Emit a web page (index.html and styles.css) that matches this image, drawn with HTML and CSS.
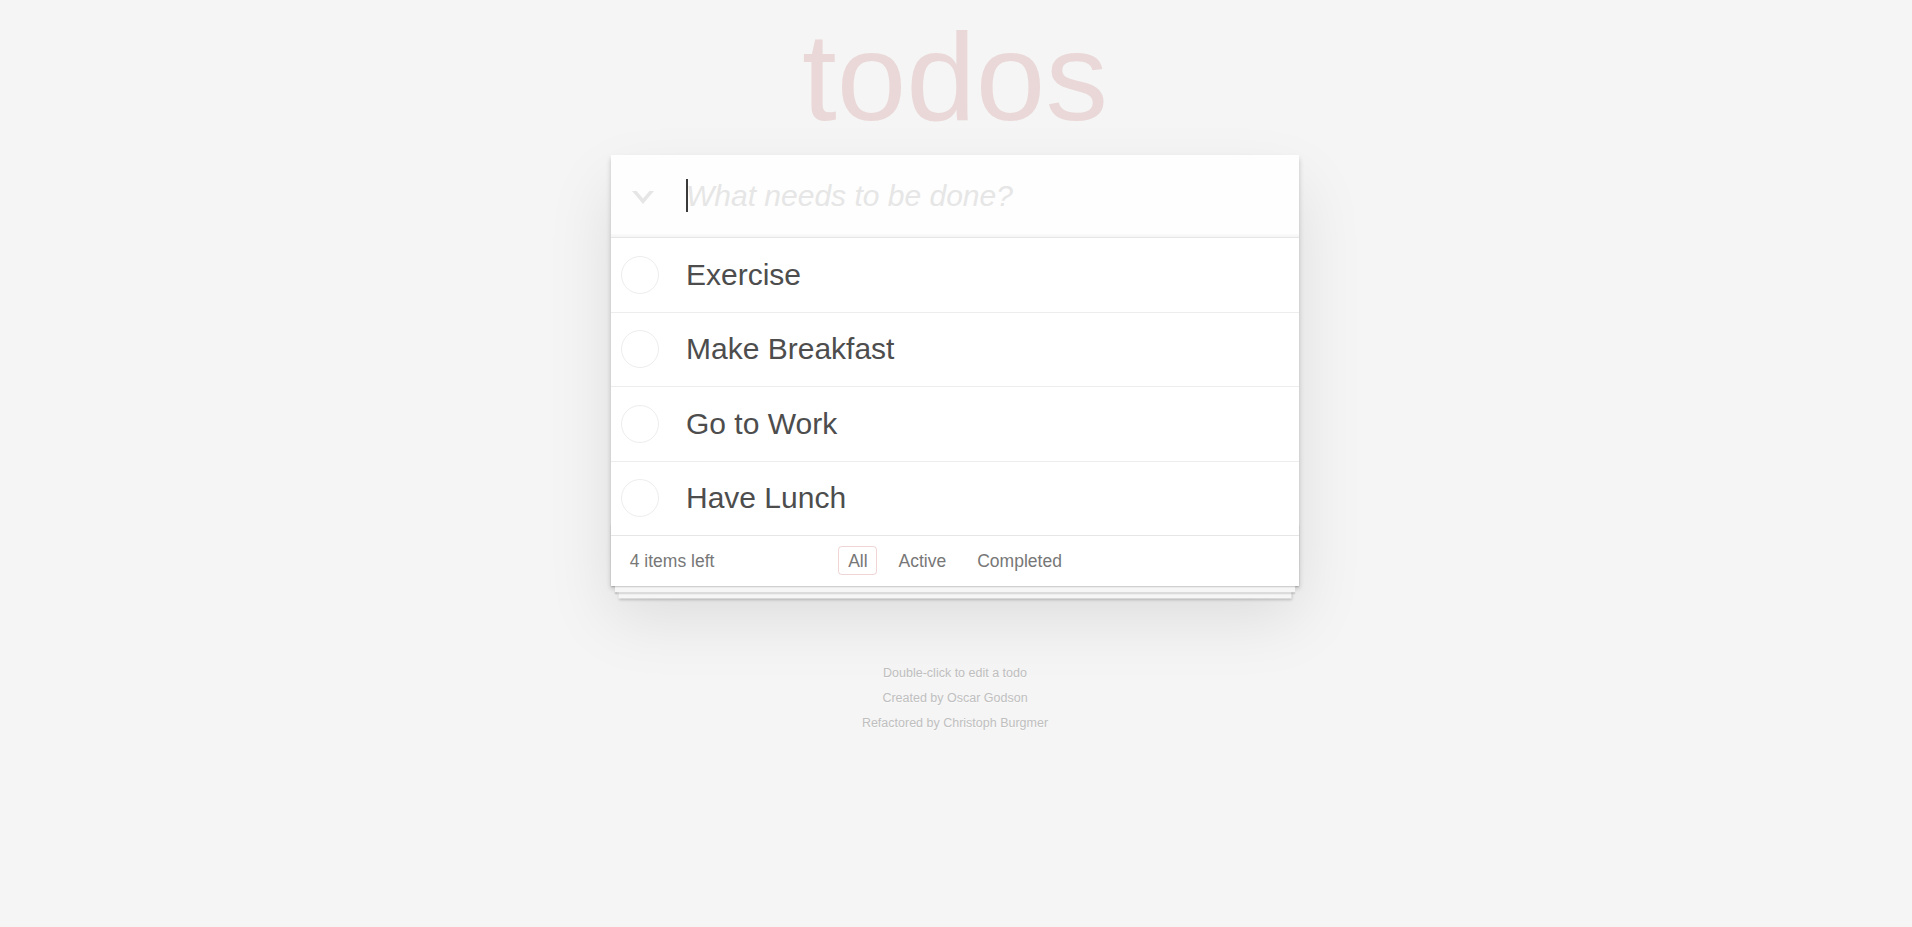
FILE: index.html
```html
<!DOCTYPE html>
<html lang="en">
<head>
<meta charset="utf-8">
<title>VanillaJS • TodoMVC</title>
<link rel="stylesheet" href="styles.css">
</head>
<body>
<main class="page">
  <h1 class="title">todos</h1>
  <section class="todoapp">
    <header class="entry">
      <label class="toggle-all" aria-label="Mark all as complete">
        <svg width="22" height="13" viewBox="0 0 22 13" aria-hidden="true"><polygon points="0,0 4.6,0 11,7.6 17.4,0 22,0 11,13" fill="#e6e6e6"/></svg>
      </label>
      <input class="new-todo" placeholder="What needs to be done?" autofocus>
      <span class="caret" aria-hidden="true"></span>
    </header>
    <ul class="todo-list">
      <li class="todo"><span class="toggle"></span><label class="todo-label">Exercise</label></li>
      <li class="todo"><span class="toggle"></span><label class="todo-label">Make Breakfast</label></li>
      <li class="todo"><span class="toggle"></span><label class="todo-label">Go to Work</label></li>
      <li class="todo"><span class="toggle"></span><label class="todo-label">Have Lunch</label></li>
    </ul>
    <footer class="footer">
      <span class="todo-count">4 items left</span>
      <ul class="filters">
        <li><a class="filter selected" href="#/">All</a></li>
        <li><a class="filter" href="#/active">Active</a></li>
        <li><a class="filter" href="#/completed">Completed</a></li>
      </ul>
      <span class="spacer"></span>
    </footer>
  </section>
  <footer class="info">
    <p>Double-click to edit a todo</p>
    <p>Created by <a class="info-link" href="#">Oscar Godson</a></p>
    <p>Refactored by <a class="info-link" href="#">Christoph Burgmer</a></p>
  </footer>
</main>
</body>
</html>
```

FILE: styles.css
```css
html,
body {
  margin: 0;
  padding: 0;
}

body {
  padding-right: 2px;
  background: #f5f5f5;
  color: #4d4d4d;
  font-family: "Liberation Sans", Arial, Helvetica, sans-serif;
  font-size: 17.5px;
  line-height: 24.5px;
}

.page {
  width: 688px;
  margin: 0 auto;
  padding-top: 14px;
}

.title {
  margin: 0 0 16px;
  height: 125px;
  font-size: 125px;
  line-height: 125px;
  font-weight: 400;
  text-align: center;
  color: rgba(175, 47, 47, 0.15);
}

.todoapp {
  position: relative;
  background: #fff;
  box-shadow: 0 2.5px 5px 0 rgba(0, 0, 0, 0.2),
              0 31.25px 62.5px 0 rgba(0, 0, 0, 0.1);
}

.entry {
  position: relative;
  display: flex;
  align-items: center;
  height: 82px;
  background: rgba(0, 0, 0, 0.003);
  box-shadow: inset 0 -2.5px 1px rgba(0, 0, 0, 0.03);
}

.toggle-all {
  flex: none;
  width: 75px;
  box-sizing: border-box;
  padding-left: 20.5px;
  margin-top: 3px;
  display: flex;
  align-items: center;
}

.new-todo {
  flex: 1;
  min-width: 0;
  height: 82px;
  box-sizing: border-box;
  margin: 0;
  padding: 20px 20px 20px 0;
  border: 0;
  outline: none;
  background: transparent;
  font-family: inherit;
  font-size: 30px;
  line-height: 42px;
  color: #4d4d4d;
  caret-color: transparent;
}

.new-todo::placeholder {
  font-style: italic;
  color: #e6e6e6;
}

.caret {
  position: absolute;
  left: 75px;
  top: 24px;
  width: 2px;
  height: 33px;
  background: #3a3a3a;
  pointer-events: none;
}

.todo-list {
  position: relative;
  z-index: 2;
  margin: 0;
  padding: 0;
  list-style: none;
  border-top: 1px solid #e6e6e6;
}

.todo {
  display: flex;
  align-items: center;
  font-size: 30px;
  border-bottom: 1px solid #ededed;
}

.todo:last-child {
  border-bottom: none;
}

.toggle {
  flex: none;
  width: 38px;
  height: 38px;
  box-sizing: border-box;
  margin-left: 10px;
  border: 1.1px solid #ededed;
  border-radius: 50%;
}

.todo-label {
  flex: 1;
  padding: 18.75px 18.75px 18.75px 27px;
  line-height: 36px;
  color: #4d4d4d;
}

.footer {
  display: grid;
  grid-template-columns: 1fr auto 1fr;
  align-items: start;
  height: 25px;
  padding: 12.5px 18.75px;
  border-top: 1px solid #e6e6e6;
  color: #777;
}

.footer::before {
  content: '';
  position: absolute;
  left: 0;
  right: 0;
  bottom: 0;
  height: 62.5px;
  overflow: hidden;
  pointer-events: none;
  box-shadow: 0 1.25px 1.25px rgba(0, 0, 0, 0.2),
              0 10px 0 -3.75px #f6f6f6,
              0 11.25px 1.25px -3.75px rgba(0, 0, 0, 0.2),
              0 20px 0 -7.5px #f6f6f6,
              0 21.25px 2.5px -7.5px rgba(0, 0, 0, 0.2);
}

.todo-count {
  text-align: left;
}

.filters {
  display: flex;
  gap: 11.5px;
  margin: 0;
  padding: 0;
  list-style: none;
}

.filter {
  color: inherit;
  text-decoration: none;
  padding: 3.75px 8.75px;
  border: 1.25px solid transparent;
  border-radius: 3.75px;
}

.filter.selected {
  border-color: rgba(175, 47, 47, 0.2);
}

.info {
  margin-top: 80.75px;
  text-align: center;
  font-size: 12.5px;
  line-height: 12.5px;
  color: #bfbfbf;
  text-shadow: 0 1px 0 rgba(255, 255, 255, 0.5);
}

.info p {
  margin: 0 0 12.5px;
}

.info-link {
  color: inherit;
  text-decoration: none;
}
```
